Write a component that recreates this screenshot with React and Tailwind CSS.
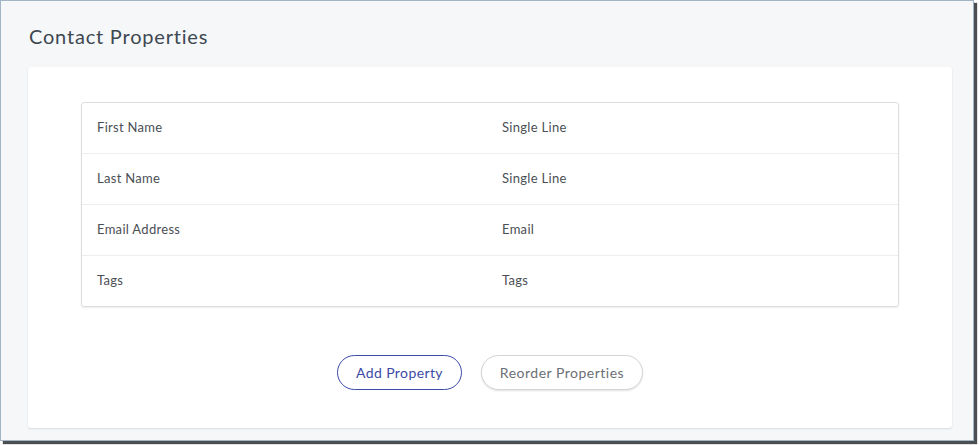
const rows = [
  ['First Name', 'Single Line'],
  ['Last Name', 'Single Line'],
  ['Email Address', 'Email'],
  ['Tags', 'Tags'],
]

export default function App() {
  return (
    <div className="w-[979px] h-[445px] bg-white" style={{ fontFamily: 'Lato, "Open Sans", sans-serif' }}>
      <div className="w-[974px] h-[441px] border border-[#a3b5c4] bg-[#f5f7f9] shadow-[3px_3px_1px_#4b4f52] flex flex-col">
        <h1 className="pl-[28px] pt-[21px] h-[66px] text-[20px] leading-[28px] tracking-[0.8px] text-[#3e4851] font-normal">
          Contact Properties
        </h1>
        <div className="ml-[27px] w-[924px] h-[361px] bg-white rounded-[3px] shadow-[0_1px_2px_rgba(0,0,0,0.12)] pt-[35px] px-[53px]">
          <div className="border border-[#dcdfe2] rounded-[3px] shadow-[0_1px_2px_rgba(0,0,0,0.08)]">
            {rows.map(([name, type], i) => (
              <div
                key={name}
                className={`flex items-center px-[15px] text-[13px] tracking-[0.3px] text-[#4a4f55] ${i > 0 ? 'h-[51px] border-t border-[#eceef0]' : 'h-[50px]'}`}
              >
                <div className="w-[405px]">{name}</div>
                <div>{type}</div>
              </div>
            ))}
          </div>
          <div className="flex justify-center gap-[19px] mt-[48px]">
            <button className="h-[35px] w-[125px] rounded-full border border-[#3b4ba6] text-[#3b4ba6] text-[14px] tracking-[0.4px] bg-white">
              Add Property
            </button>
            <button className="h-[35px] w-[162px] rounded-full border border-[#d2d5d8] text-[#6b7075] text-[14px] tracking-[0.5px] bg-white shadow-[0_1px_2px_rgba(0,0,0,0.12)]">
              Reorder Properties
            </button>
          </div>
        </div>
      </div>
    </div>
  )
}
